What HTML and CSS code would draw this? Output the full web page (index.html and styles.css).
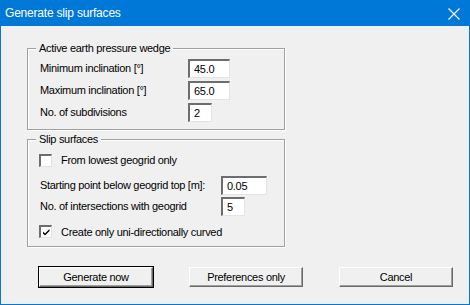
FILE: index.html
```html
<!DOCTYPE html>
<html lang="en">
<head>
    <meta charset="UTF-8">
    <title>Generate slip surfaces</title>
    <link rel="stylesheet" href="styles.css">
</head>
<body>
    <div class="window">
        <div class="titlebar">
            <span class="title">Generate slip surfaces</span>
            <span class="close">
                <svg width="12" height="12" viewBox="0 0 12 12">
                    <path d="M0.5 0.5 L11.5 11.5 M11.5 0.5 L0.5 11.5" stroke="#fff" stroke-width="1.1" fill="none"/>
                </svg>
            </span>
        </div>

        <div class="content">
            <fieldset class="group group-wedge">
                <legend>Active earth pressure wedge</legend>
                <div class="row">
                    <label>Minimum inclination [°]</label>
                    <div class="field field-wedge">45.0</div>
                </div>
                <div class="row">
                    <label>Maximum inclination [°]</label>
                    <div class="field field-wedge">65.0</div>
                </div>
                <div class="row">
                    <label>No. of subdivisions</label>
                    <div class="field field-small">2</div>
                </div>
            </fieldset>

            <fieldset class="group group-slip">
                <legend>Slip surfaces</legend>
                <div class="row check-row first">
                    <span class="checkbox"></span>
                    <label>From lowest geogrid only</label>
                </div>
                <div class="row slip-row">
                    <label>Starting point below geogrid top [m]:</label>
                    <div class="field field-slip">0.05</div>
                </div>
                <div class="row slip-row tight">
                    <label>No. of intersections with geogrid</label>
                    <div class="field field-small">5</div>
                </div>
                <div class="row check-row last">
                    <span class="checkbox">
                        <svg width="9" height="9" viewBox="0 0 9 9">
                            <path d="M1 3.5 L3 5.5 L7.5 1 L7.5 3 L3 7.5 L1 5.5 Z" fill="#000"/>
                        </svg>
                    </span>
                    <label>Create only uni-directionally curved</label>
                </div>
            </fieldset>

            <div class="buttons">
                <button class="btn btn-default">Generate now</button>
                <button class="btn">Preferences only</button>
                <button class="btn">Cancel</button>
            </div>
        </div>
    </div>
</body>
</html>
```

FILE: styles.css
```css
body {
    margin: 0;
    font-family: 'Liberation Sans', Arial, sans-serif;
    font-size: 11px;
    letter-spacing: -0.3px;
    color: #000;
}
.window {
    width: 470px;
    height: 305px;
    box-sizing: border-box;
    border: 1px solid #0078d7;
    background: #f0f0f0;
}
.titlebar {
    width: 468px;
    height: 25px;
    box-sizing: border-box;
    background: #0078d7;
    color: #fff;
    display: flex;
    align-items: center;
    padding: 0 9px 0 4px;
    font-size: 12px;
    letter-spacing: -0.2px;
}
.title {
    margin-top: -1px;
}
.close {
    display: flex;
    margin-left: auto;
    margin-top: 1px;
}
.content {
    padding: 16px 0 0 26px;
}
.group {
    box-sizing: border-box;
    width: 258px;
    margin: 0;
    padding: 0 0 6px 0;
    border: 1px solid #a0a0a0;
    box-shadow: inset 1px 1px 0 #fff, 1px 1px 0 #fff;
}
.group legend {
    margin-left: 8px;
    padding: 0 3px;
    line-height: 13px;
    background: #f0f0f0;
}
.group-wedge {
    padding-top: 2px;
}
.group-slip {
    margin-top: 3px;
    padding-top: 4px;
    padding-bottom: 4px;
}
.row {
    display: flex;
    align-items: center;
    height: 22px;
    padding-left: 12px;
}
.row label {
    flex: 1;
}
.field {
    box-sizing: border-box;
    height: 19px;
    background: #fff;
    border-style: solid;
    border-width: 2px 1px 1px 2px;
    border-color: #6d6d6d #e3e3e3 #e3e3e3 #6d6d6d;
    padding: 2px 0 0 4px;
    line-height: 13px;
}
.field-wedge {
    width: 42px;
    margin-right: 54px;
}
.field-small {
    width: 24px;
}
.group-wedge .field-small {
    margin-right: 72px;
}
.field-slip {
    width: 46px;
    margin-right: 17px;
}
.group-slip .field-small {
    margin-right: 39px;
}
.check-row {
    height: 20px;
    padding-left: 11px;
}
.check-row.last {
    margin-top: 5px;
    height: 21px;
}
.slip-row {
    margin-top: 4px;
}
.slip-row.tight {
    margin-top: 0;
    height: 20px;
}
.checkbox {
    box-sizing: border-box;
    width: 13px;
    height: 13px;
    margin-right: 9px;
    background: #fff;
    border-style: solid;
    border-width: 2px 1px 1px 2px;
    border-color: #6d6d6d #e3e3e3 #e3e3e3 #6d6d6d;
    display: flex;
    align-items: center;
    justify-content: center;
}
.checkbox svg {
    display: block;
}
.buttons {
    display: flex;
    gap: 36px;
    margin-top: 20px;
    padding-left: 12px;
}
.btn {
    box-sizing: border-box;
    width: 114px;
    height: 20px;
    margin: 0;
    padding: 0;
    font-family: 'Liberation Sans', Arial, sans-serif;
    font-size: 11px;
    letter-spacing: -0.3px;
    color: #000;
    background: #f0f0f0;
    border: 1px solid;
    border-color: #fff #696969 #696969 #fff;
    box-shadow: inset -1px -1px 0 #a0a0a0;
}
.btn-default {
    outline: 1px solid #000;
    outline-offset: 0;
}
```
